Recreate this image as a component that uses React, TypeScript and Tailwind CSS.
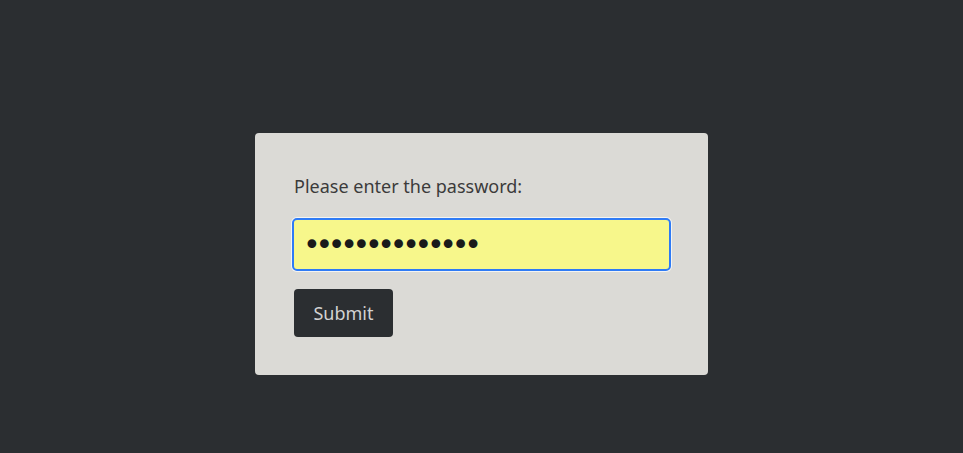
import React, { useEffect, useRef, useState } from 'react';

export default function App() {
    const [password, setPassword] = useState('hunter2hunter2');
    const inputRef = useRef<HTMLInputElement>(null);

    useEffect(() => {
        const el = inputRef.current;
        if (el) {
            el.focus();
            el.setSelectionRange(el.value.length, el.value.length);
        }
    }, []);

    return (
        <div className="min-h-screen w-full bg-[#2b2e31] pt-[133px]" style={{ fontFamily: '"Noto Sans", "Open Sans", sans-serif' }}>
            <form
                onSubmit={e => e.preventDefault()}
                className="mx-auto flex w-[453px] flex-col rounded-[4px] bg-[#dbdad6] px-[37px] pt-[40px] pb-[38px]"
            >
                <label htmlFor="pw" className="pl-[2px] text-[18px] leading-[26px] text-[#3b3b3b]">
                    Please enter the password:
                </label>
                <input
                    id="pw"
                    ref={inputRef}
                    type="password"
                    value={password}
                    onChange={e => setPassword(e.target.value)}
                    className="mt-[19px] h-[53px] w-full rounded-[5px] border-2 border-[#2f7bf5] bg-[#f7f78b] px-[9px] font-['DejaVu_Sans',sans-serif] text-[30px] leading-[49px] tracking-[-5.3px] text-[#1a1a1a] caret-[#1a1a1a] shadow-[0_0_0_1px_#f4f4f2] outline-none"
                />
                <button
                    type="submit"
                    className="mt-[18px] ml-[2px] h-[48px] w-[99px] rounded-[4px] bg-[#2b2e31] text-[18px] text-[#d2d2d2]"
                >
                    Submit
                </button>
            </form>
        </div>
    );
}
